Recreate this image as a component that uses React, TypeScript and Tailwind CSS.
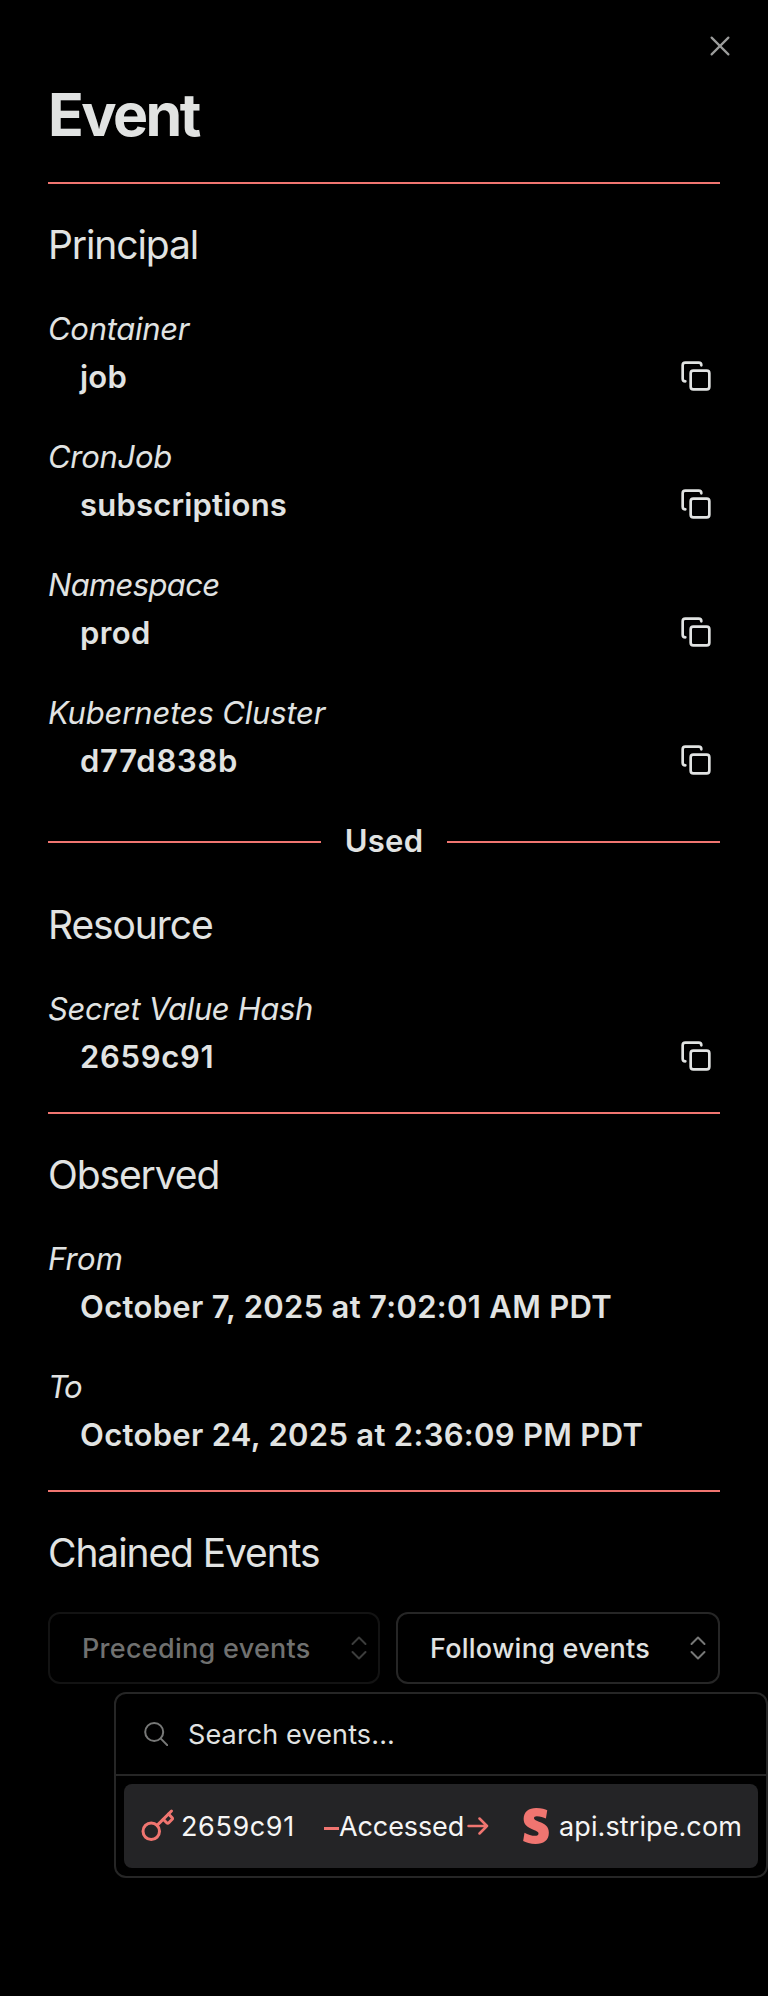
import { ReactNode } from "react";
import { Copy, Key } from "lucide-react";

function Rule() {
  return <div className="h-0.5 bg-[#f07570]" />;
}

function Heading({ children }: { children: ReactNode }) {
  return (
    <h2 className="h-14 text-[39px] leading-[57px] font-normal tracking-[-1.1px]">
      {children}
    </h2>
  );
}

type FieldProps = {
  label: string;
  value: string;
  copy?: boolean;
  labelTracking?: string;
  valueTracking?: string;
};

function Field({
  label,
  value,
  copy = true,
  labelTracking = "tracking-[-0.3px]",
  valueTracking = "tracking-[0.2px]",
}: FieldProps) {
  return (
    <div className="text-[31px] leading-[49px]">
      <dt className={`h-12 italic ${labelTracking}`}>{label}</dt>
      <dd className="flex h-12 items-center justify-between pr-2 pl-8">
        <span className={`h-12 font-semibold whitespace-nowrap ${valueTracking}`}>{value}</span>
        {copy && (
          <button aria-label="Copy">
            <Copy size={32} strokeWidth={2} />
          </button>
        )}
      </dd>
    </div>
  );
}

function Carets({ className }: { className: string }) {
  return (
    <svg width="16" height="24" viewBox="0 0 16 24" fill="none" stroke="currentColor" strokeWidth="2" strokeLinecap="round" strokeLinejoin="round" className={className}>
      <path d="M1.5 8 8 1.5 14.5 8M1.5 16 8 22.5 14.5 16" />
    </svg>
  );
}

function StripeMark() {
  return (
    <svg width="36" height="36" viewBox="0 0 24 24" fill="currentColor">
      <path d="M13.976 9.15c-2.172-.806-3.356-1.426-3.356-2.409 0-.831.683-1.305 1.901-1.305 2.227 0 4.515.858 6.09 1.631l.89-5.494C18.252.975 15.697 0 12.165 0 9.667 0 7.589.654 6.104 1.872 4.56 3.147 3.757 4.992 3.757 7.218c0 4.039 2.467 5.76 6.476 7.219 2.585.92 3.445 1.574 3.445 2.583 0 .98-.84 1.545-2.354 1.545-1.875 0-4.965-.921-6.99-2.109l-.9 5.555C5.175 22.99 8.385 24 11.714 24c2.641 0 4.843-.624 6.328-1.813 1.664-1.305 2.525-3.236 2.525-5.732 0-4.128-2.524-5.851-6.594-7.305h.003z" />
    </svg>
  );
}

function EventsPopover() {
  return (
    <div className="absolute top-20 right-[-48px] w-[654px] rounded-xl border-2 border-[#262626] bg-black text-[27px] leading-10">
      <div className="flex h-[82px] items-center border-b-2 border-[#262626] pl-7">
        <svg width="24" height="24" viewBox="0 0 24 24" fill="none" stroke="currentColor" strokeWidth="2" className="shrink-0 text-[#777877]">
          <circle cx="10.2" cy="10" r="9" />
          <path d="m16.6 16.4 6.8 6.8" strokeLinecap="round" />
        </svg>
        <span className="mt-0.5 ml-5 tracking-[0.13px]">Search events...</span>
      </div>
      <div className="p-2">
        <div className="flex h-[84px] items-center rounded-lg bg-[#242426] pl-4 text-[#f5f5f5]">
          <Key size={36} strokeWidth={2} className="shrink-0 text-[#f07570]" />
          <span className="mt-px ml-[5px] w-[143px] shrink-0 tracking-[0.6px]">2659c91</span>
          <span className="mt-1 h-[3px] w-[15px] shrink-0 bg-[#f07570]" />
          <span className="mt-px w-[128px] shrink-0 tracking-[-0.1px]">Accessed</span>
          <svg width="22" height="18" viewBox="0 0 22 18" fill="none" stroke="currentColor" strokeWidth="2.5" strokeLinecap="round" strokeLinejoin="round" className="shrink-0 text-[#f07570]">
            <path d="M1.5 9h18.5M12.5 1.5 20 9l-7.5 7.5" />
          </svg>
          <span className="ml-[29px] shrink-0 text-[#f07570]">
            <StripeMark />
          </span>
          <span className="mt-px ml-[5px] whitespace-nowrap tracking-[0.1px]">api.stripe.com</span>
        </div>
      </div>
    </div>
  );
}

export default function App() {
  return (
    <div className="relative min-h-[1996px] overflow-hidden bg-black px-12 pt-[78px] font-['Inter',sans-serif] text-[#e1e3e2]">
      <button aria-label="Close" className="absolute top-9 right-[38px] text-[#9b9c9b]">
        <svg width="20" height="20" viewBox="0 0 20 20" fill="none" stroke="currentColor" strokeWidth="2.2" strokeLinecap="round">
          <path d="M1.6 1.6 18.4 18.4M18.4 1.6 1.6 18.4" />
        </svg>
      </button>

      <h1 className="mb-8 h-[72px] text-[59px] leading-[73px] font-bold tracking-[-2.6px]">Event</h1>
      <Rule />

      <section className="pt-8">
        <Heading>Principal</Heading>
        <dl className="mt-8 flex flex-col gap-8">
          <Field label="Container" value="job" />
          <Field label="CronJob" value="subscriptions" />
          <Field label="Namespace" value="prod" labelTracking="tracking-[-0.65px]" valueTracking="tracking-[0.4px]" />
          <Field label="Kubernetes Cluster" value="d77d838b" labelTracking="tracking-[-0.17px]" valueTracking="tracking-[0.75px]" />
        </dl>
      </section>

      <div className="my-8 flex h-12 items-center">
        <div className="mt-[3px] h-0.5 flex-1 bg-[#f07570]" />
        <span className="mt-0.5 w-[126px] text-center text-[31px] leading-12 font-semibold tracking-[0.3px]">Used</span>
        <div className="mt-[3px] h-0.5 flex-1 bg-[#f07570]" />
      </div>

      <section>
        <Heading>Resource</Heading>
        <dl className="mt-8 mb-8">
          <Field label="Secret Value Hash" value="2659c91" labelTracking="tracking-[-0.38px]" valueTracking="tracking-[0.7px]" />
        </dl>
      </section>
      <Rule />

      <section className="pt-8">
        <Heading>Observed</Heading>
        <dl className="mt-8 mb-8 flex flex-col gap-8">
          <Field label="From" value="October 7, 2025 at 7:02:01 AM PDT" copy={false} labelTracking="tracking-[0.2px]" valueTracking="tracking-[0.31px]" />
          <Field label="To" value="October 24, 2025 at 2:36:09 PM PDT" copy={false} labelTracking="tracking-[-1.5px]" valueTracking="tracking-[0.31px]" />
        </dl>
      </section>
      <Rule />

      <section className="pt-8">
        <Heading>Chained Events</Heading>
        <div className="relative mt-8">
          <div className="flex gap-4 text-[27px] leading-10 font-medium">
            <button disabled className="flex h-[72px] w-[332px] items-center justify-between rounded-xl border-2 border-[#131313] pr-[11px] pl-8 text-[#707170]">
              <span className="mt-px tracking-[0.28px]">Preceding events</span>
              <Carets className="text-[#3c3d3c]" />
            </button>
            <button className="flex h-[72px] flex-1 items-center justify-between rounded-xl border-2 border-[#262626] pr-3 pl-8">
              <span className="mt-px tracking-[0.25px] whitespace-nowrap">Following events</span>
              <Carets className="text-[#777877]" />
            </button>
          </div>
          <EventsPopover />
        </div>
      </section>
    </div>
  );
}
